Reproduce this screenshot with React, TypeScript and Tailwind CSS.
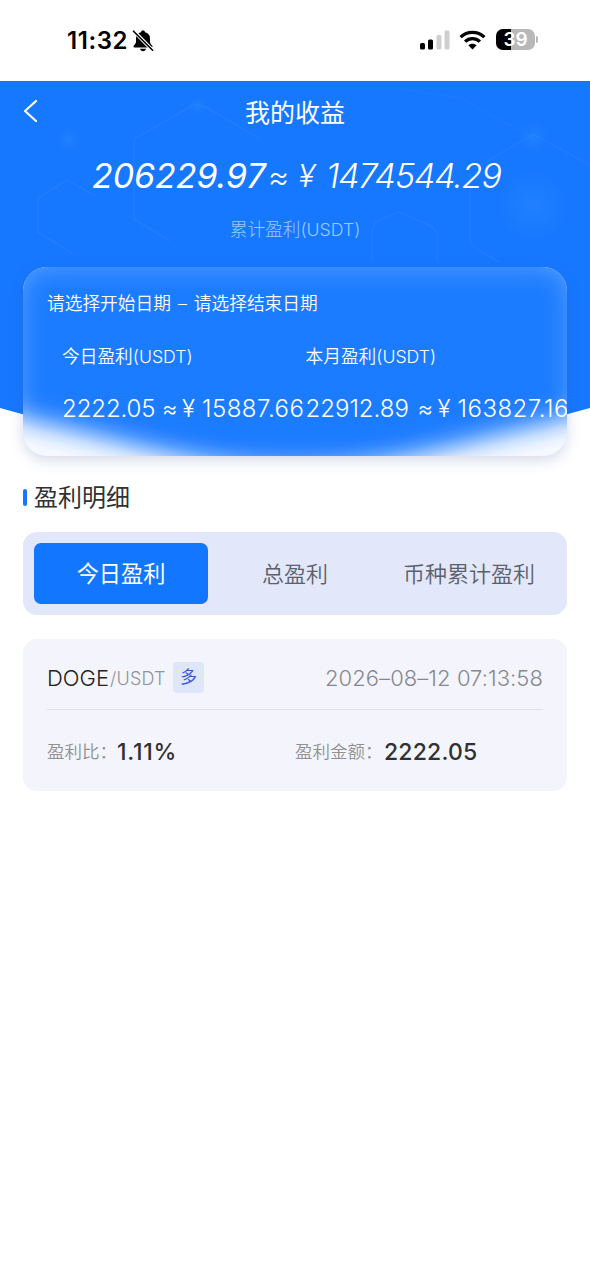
import React from 'react';

const StatusBar: React.FC = () => {
  return (
    <div className="h-[81px] flex items-center justify-between pl-[67px] pr-[52px] bg-white text-black">
      <div className="flex items-center gap-[4px]">
        <span className="text-[24px] leading-[30px] font-semibold tracking-[0.6px] w-[61px] whitespace-nowrap">11:32</span>
        {/* Muted bell */}
        <svg width="22" height="24" viewBox="0 0 22 24">
          <path d="M11 1.500c-1.300 0-1.900.7-2 1.700C5.800 4 4 6.200 4 9v3.500c0 1.700-.8 2.600-2 3.900-1 1.100-.5 2 .7 2h16.600c1.200 0 1.700-.9.7-2-1.200-1.300-2-2.200-2-3.900V9c0-2.800-1.800-5-5-5.800-.1-1-.7-1.700-2-1.700Z" fill="#000" />
          <path d="M8 19.800h6c-.3 1.600-1.500 2.500-3 2.500s-2.700-.9-3-2.500Z" fill="#000" />
          <path d="M2.200 2.600 20.300 20.900" stroke="#fff" strokeWidth="3.600" />
          <path d="M1.500 2.200 20.600 21.200" stroke="#000" strokeWidth="1.600" strokeLinecap="round" />
        </svg>
      </div>
      <div className="flex items-center -mt-[2px]">
        <svg width="31" height="20" viewBox="0 0 31 20">
          <rect x="0" y="13" width="5" height="6.500" rx="1.500" />
          <rect x="8" y="9.500" width="5" height="10" rx="1.500" />
          <rect x="16.500" y="5" width="5" height="14.500" rx="1.500" fill="#cfcfcf" />
          <rect x="24.500" y="0.500" width="5" height="19" rx="1.500" fill="#cfcfcf" />
        </svg>
        <svg className="ml-[8px]" width="27" height="20" viewBox="0 0 27 20" fill="none" stroke="#000" strokeWidth="3.200">
          <path d="M1.600 7.200C8.200.7 18.800.7 25.400 7.200" />
          <path d="M6.100 11.700c4.100-4 10.700-4 14.800 0" />
          <path d="M13.500 19.500 9.300 15.300c2.300-2.200 6.100-2.200 8.400 0Z" fill="#000" stroke="none" />
        </svg>
        <div className="relative ml-[10px] w-[39px] h-[21px] rounded-[7px] overflow-hidden bg-[#b8b8b8]">
          <div className="w-[15px] h-full bg-black" />
          <span className="absolute inset-0 text-center text-white text-[19px] leading-[21px] font-semibold">39</span>
        </div>
        <div className="ml-[1px] w-[2px] h-[7px] rounded-r-full bg-[#b8b8b8]" />
      </div>
    </div>
  );
};

const HeroBackground: React.FC = () => {
  return (
    <svg className="absolute left-0 top-0" width="590" height="375" viewBox="0 0 590 375" fill="none">
      <defs>
        <radialGradient id="glow">
          <stop offset="0" stopColor="#4aa0ff" stopOpacity="0.2" />
          <stop offset="1" stopColor="#4aa0ff" stopOpacity="0" />
        </radialGradient>
      </defs>
      <path d="M0 0H590V327C440 368 370 380 295 380S150 368 0 327Z" fill="#1678ff" />
      <g stroke="#5cabff" strokeOpacity="0.12" strokeWidth="1.500">
        <path d="M134 58 192 25q6-3 12 0l56 33M134 58v80l36 22" />
        <path d="M38 117 67 99l30 17M38 117v34l35 22" />
        <path d="M372 180v-28q0-10 8-13l19-8 30 13q8 4 8 12v24" />
        <path d="M486 81 533 53l57 31M470 85v72q0 8 9 12l20 12" />
        <path d="M400 8 460 17 533 57" strokeOpacity="0.07" />
      </g>
      <circle cx="69" cy="58" r="12" fill="url(#glow)" />
      <circle cx="198" cy="25" r="9" fill="url(#glow)" />
      <circle cx="533" cy="56" r="15" fill="url(#glow)" />
      <circle cx="533" cy="125" r="36" fill="url(#glow)" />
    </svg>
  );
};

const SummaryCard: React.FC = () => {
  return (
    <div className="relative mx-[23px] h-[189px] rounded-[24px] overflow-hidden bg-[#f6f9ff] text-white shadow-[0_4px_14px_rgba(60,80,160,0.22)]">
      {/* Frosted copy of the header curve */}
      <svg className="absolute inset-0" width="544" height="189" viewBox="0 0 544 189">
        <defs>
          <filter id="frost" filterUnits="userSpaceOnUse" x="-100" y="-100" width="744" height="400">
            <feGaussianBlur stdDeviation="13" />
          </filter>
        </defs>
        <path d="M-90-90H634V136C484 156 364 207 272 207S60 156-90 136Z" fill="#1d7bff" filter="url(#frost)" />
      </svg>
      <div className="absolute inset-0 rounded-[24px] shadow-[inset_0_2px_24px_rgba(255,255,255,0.25)]" />
      <div className="relative pt-[25px] pl-[24px] text-[17.700px] leading-[24px] font-[350] whitespace-nowrap flex">
        <span>请选择开始日期</span>
        <span className="w-[23px] text-center">–</span>
        <span>请选择结束日期</span>
      </div>
      <div className="relative mt-[29px] pl-[39px] flex text-[17.700px] leading-[24px] font-[350] whitespace-nowrap">
        <div className="w-[243.500px]">今日盈利(USDT)</div>
        <div>本月盈利(USDT)</div>
      </div>
      <div className="relative mt-[24px] pl-[39px] flex text-[24px] leading-[32px] font-[320] whitespace-nowrap">
        <div className="w-[243.500px] shrink-0 flex">
          <span className="w-[100px] tracking-[-0.100px]">2222.05</span>
          <span className="w-[20px]">≈</span>
          <span className="w-[20px]">¥</span>
          <span className="tracking-[0.5px]">15887.66</span>
        </div>
        <div className="shrink-0 flex">
          <span className="w-[112px]">22912.89</span>
          <span className="w-[20px]">≈</span>
          <span className="w-[20px]">¥</span>
          <span className="tracking-[0.5px]">163827.16</span>
        </div>
      </div>
    </div>
  );
};

const tabs = ['今日盈利', '总盈利', '币种累计盈利'];

const App: React.FC = () => {
  return (
    <div className="w-[590px] min-h-[1280px] bg-white overflow-hidden font-['Inter','Noto_Sans_CJK_SC',sans-serif]">
      <StatusBar />

      <section className="relative h-[375px]">
        <HeroBackground />
        <div className="relative h-[60px] pt-[3px] flex items-center justify-center text-white">
          <svg className="absolute left-[22px] top-[18px]" width="16" height="24" viewBox="0 0 16 24" fill="none" stroke="#fff" strokeWidth="2.200" strokeLinecap="round" strokeLinejoin="round">
            <path d="M14 2 3 12l11 10" />
          </svg>
          <h1 className="text-[25px] leading-[36px] font-normal">我的收益</h1>
        </div>
        <div className="relative h-[70px] pl-[92px] flex items-center text-white italic whitespace-nowrap text-[34px] leading-[40px]">
          <span className="w-[176px] font-[400] tracking-[-0.050px]">206229.97</span>
          <span className="w-[30px] text-[32px] pt-[2px] font-[350]">≈</span>
          <span className="w-[28px] text-[31px] font-light">¥</span>
          <span className="font-light tracking-[-1.100px]">1474544.29</span>
        </div>
        <div className="relative h-[56px] pt-[7px] text-center text-[17.700px] leading-[24px] font-light text-[#9ccaff]">累计盈利(USDT)</div>
        <SummaryCard />
      </section>

      <main className="px-[23px]">
        <div className="mt-[24px] h-[36px] flex items-center gap-[7px]">
          <span className="mt-[-2px] w-[4px] h-[17px] rounded-full bg-[#1678ff]" />
          <h2 className="text-[24px] leading-[36px] text-[#303133]">盈利明细</h2>
        </div>

        {/* Tabs */}
        <div className="mt-[16px] h-[83px] p-[11px] flex rounded-[14px] bg-[#e2e8fa]">
          {tabs.map((tab, index) => (
            <button
              key={tab}
              className={
                index === 0
                  ? 'w-[174px] pt-[1px] rounded-[7px] bg-[#1276ff] text-white text-[22.200px] font-normal'
                  : 'w-[174px] pt-[1px] text-[#5b606c] text-[22px] font-[350]'
              }
            >
              {tab}
            </button>
          ))}
        </div>

        {/* Record */}
        <div className="mt-[24px] h-[152px] px-[24px] rounded-[14px] bg-[#f4f5fc]">
          <div className="h-[71px] pt-[7px] flex items-center border-b border-[#e0e2e8] whitespace-nowrap">
            <span className="w-[63px] pt-[1px] text-[22px] font-light text-[#222]">DOGE</span>
            <span className="w-[56px] pt-[2px] text-[18px] tracking-[0.200px] font-light text-[#909399]">/USDT</span>
            <span className="ml-[7px] w-[31px] h-[31px] flex items-center justify-center rounded-[4px] bg-[#dfe6f8] text-[17px] text-[#3553d8] font-[350]">多</span>
            <span className="ml-auto pt-[1px] text-[22px] tracking-[0.060px] font-light text-[#85888e]">2026–08–12 07:13:58</span>
          </div>
          <div className="h-[81px] pt-[3px] flex items-center text-[17.500px] text-[#909090] font-[350] whitespace-nowrap">
            <div className="w-[248px] flex items-center">
              <span className="w-[70px]">盈利比：</span>
              <span className="text-[23px] tracking-[0.700px] text-[#303133] font-[450]">1.11%</span>
            </div>
            <div className="flex items-center">
              <span className="w-[89px]">盈利金额：</span>
              <span className="text-[23px] tracking-[0.200px] text-[#303133] font-[450]">2222.05</span>
            </div>
          </div>
        </div>
      </main>
    </div>
  );
};

export default App;
